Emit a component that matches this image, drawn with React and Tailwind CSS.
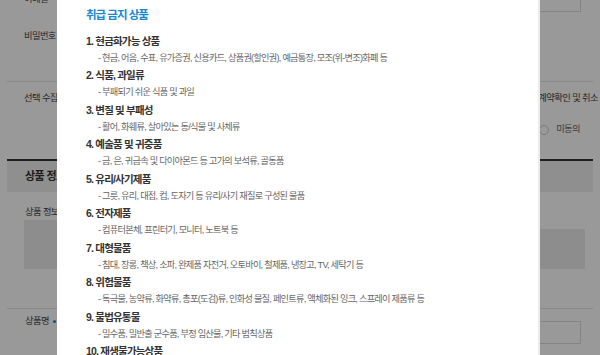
import React from 'react';

const items = [
  ['1. 현금화가능 상품', '- 현금, 어음, 수표, 유가증권, 신용카드, 상품권(할인권), 예금통장, 모조(위-변조)화폐 등'],
  ['2. 식품, 과일류', '- 부패되기 쉬운 식품 및 과일'],
  ['3. 변질 및 부패성', '- 활어, 화훼류, 살아있는 동/식물 및 사체류'],
  ['4. 예술품 및 귀중품', '- 금, 은, 귀금속 및 다이아몬드 등 고가의 보석류, 골동품'],
  ['5. 유리/사기제품', '- 그릇, 유리, 대접, 컵, 도자기 등 유리/사기 재질로 구성된 물품'],
  ['6. 전자제품', '- 컴퓨터본체, 프린터기, 모니터, 노트북 등'],
  ['7. 대형물품', '- 침대, 장롱, 책상, 소파, 완제품 자전거, 오토바이, 철제품, 냉장고, TV, 세탁기 등'],
  ['8. 위험물품', '- 독극물, 농약류, 화약류, 총포(도검)류, 인화성 물질, 페인트류, 액체화된 잉크, 스프레이 제품류 등'],
  ['9. 불법유통물', '- 밀수품, 밀반출 군수품, 부정 임산물, 기타 범칙상품'],
  ['10. 재생불가능상품', '- 재생이 불가능한 상품'],
];

export default function App() {
  return (
    <div className="relative w-[600px] h-[355px] overflow-hidden bg-white font-['Liberation_Sans','Noto_Sans_CJK_KR',sans-serif]">
      {/* Page behind the dialog */}
      <div className="mx-[7px] -mt-[17px] text-[9.3px] text-[#444] tracking-[-0.6px]">
        {/* 이메일 */}
        <div className="flex items-center h-[34px]">
          <div className="w-[90px] pl-[17px]">이메일</div>
          <div className="ml-auto mr-[12px] w-[300px] h-[24px] border border-[#ddd]" />
        </div>
        {/* 비밀번호 */}
        <div className="h-[65px] pt-[11px] border-b border-[#e3e3e3]">
          <div className="pl-[17px] leading-[16px]">비밀번호</div>
        </div>
        {/* 선택 수집 */}
        <div className="flex h-[79px] border-b-2 border-[#333]">
          <div className="w-[90px] pl-[17px] pt-[8px] leading-[16px]">선택 수집 동의</div>
          <div className="flex-1 flex flex-col items-end pt-[8px]">
            <p className="leading-[16px] -mr-[5px]">개인정보 수집 및 이용 안내 계약확인 및 취소</p>
            <div className="flex items-center gap-[20px] mt-[17px] pr-[13px]">
              <label className="flex items-center gap-[7px]">
                <span className="w-[10px] h-[10px] rounded-full border border-[#ccc]" />
                동의
              </label>
              <label className="flex items-center gap-[7px] text-[#666]">
                <span className="w-[10px] h-[10px] rounded-full border border-[#ccc]" />
                미동의
              </label>
            </div>
          </div>
        </div>
        {/* 상품 정보 헤더 */}
        <div className="h-[31px] bg-[#eeeeee] pl-[18px] flex items-center text-[11px] font-bold text-[#333] tracking-[-0.6px]">
          상품 정보
        </div>
        {/* 상품 정보 */}
        <div className="h-[117px] pt-[12px] border-b border-[#e3e3e3]">
          <div className="pl-[18px] leading-[16px]">상품 정보</div>
          <div className="flex items-end pl-[17px] pr-[8px]">
            <div className="w-[200px] h-[49px] bg-[#ebebeb]" />
            <div className="ml-auto w-[300px] h-[40px] bg-[#ebebeb]" />
          </div>
        </div>
        {/* 상품명 */}
        <div className="flex items-start pt-[2px]">
          <div className="w-[90px] pl-[18px] leading-[20px] flex items-center gap-[4px]">
            상품명
            <span className="w-[3px] h-[3px] rounded-full bg-[#1b87d1]" />
          </div>
          <div className="ml-auto mr-[12px] mt-[10px] w-[300px] h-[23px] border border-[#ddd]" />
        </div>
      </div>

      {/* Dim overlay */}
      <div className="absolute inset-0 bg-black/40" />

      {/* Dialog */}
      <div className="absolute left-[57px] top-0 w-[483px] h-full bg-white border-r-2 border-[#ececec] pl-[29px] pt-[5px]">
        <h2 className="text-[11.5px] font-bold leading-[20px] text-[#1b87d1] tracking-[-1px]">취급 금지 상품</h2>
        <ol className="mt-[7.5px]">
          {items.map(([title, desc]) => (
            <li key={title} className="pb-[1.5px]">
              <div className="text-[10.5px] font-bold leading-[17px] text-[#333] tracking-[-0.8px]">{title}</div>
              <div className="pl-[12px] text-[9.2px] leading-[16px] text-[#666] tracking-[-0.75px]">{desc}</div>
            </li>
          ))}
        </ol>
      </div>
    </div>
  );
}
